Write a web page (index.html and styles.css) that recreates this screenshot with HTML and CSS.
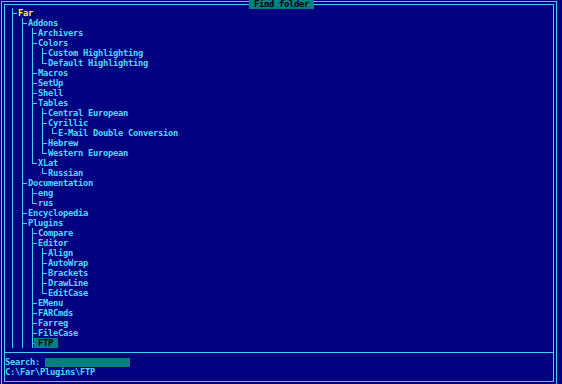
FILE: index.html
```html
<!DOCTYPE html>
<html>
<head>
<meta charset="utf-8">
<title>Find folder</title>
<link rel="stylesheet" href="styles.css">
</head>
<body>

<div class="dialog">
    <div class="title">Find folder</div>
    <div class="inner">

        <div class="tree">
            <div class="row"><i class="t"></i><span class="name root">Far</span></div>
            <div class="row"><i class="v"></i><i class="t"></i><span class="name">Addons</span></div>
            <div class="row"><i class="v"></i><i class="v"></i><i class="t"></i><span class="name">Archivers</span></div>
            <div class="row"><i class="v"></i><i class="v"></i><i class="t"></i><span class="name">Colors</span></div>
            <div class="row"><i class="v"></i><i class="v"></i><i class="v"></i><i class="t"></i><span class="name">Custom Highlighting</span></div>
            <div class="row"><i class="v"></i><i class="v"></i><i class="v"></i><i class="l"></i><span class="name">Default Highlighting</span></div>
            <div class="row"><i class="v"></i><i class="v"></i><i class="t"></i><span class="name">Macros</span></div>
            <div class="row"><i class="v"></i><i class="v"></i><i class="t"></i><span class="name">SetUp</span></div>
            <div class="row"><i class="v"></i><i class="v"></i><i class="t"></i><span class="name">Shell</span></div>
            <div class="row"><i class="v"></i><i class="v"></i><i class="t"></i><span class="name">Tables</span></div>
            <div class="row"><i class="v"></i><i class="v"></i><i class="v"></i><i class="t"></i><span class="name">Central European</span></div>
            <div class="row"><i class="v"></i><i class="v"></i><i class="v"></i><i class="t"></i><span class="name">Cyrillic</span></div>
            <div class="row"><i class="v"></i><i class="v"></i><i class="v"></i><i class="v"></i><i class="l"></i><span class="name">E-Mail Double Conversion</span></div>
            <div class="row"><i class="v"></i><i class="v"></i><i class="v"></i><i class="t"></i><span class="name">Hebrew</span></div>
            <div class="row"><i class="v"></i><i class="v"></i><i class="v"></i><i class="l"></i><span class="name">Western European</span></div>
            <div class="row"><i class="v"></i><i class="v"></i><i class="l"></i><span class="name">XLat</span></div>
            <div class="row"><i class="v"></i><i class="v"></i><i class="e"></i><i class="l"></i><span class="name">Russian</span></div>
            <div class="row"><i class="v"></i><i class="t"></i><span class="name">Documentation</span></div>
            <div class="row"><i class="v"></i><i class="v"></i><i class="t"></i><span class="name">eng</span></div>
            <div class="row"><i class="v"></i><i class="v"></i><i class="l"></i><span class="name">rus</span></div>
            <div class="row"><i class="v"></i><i class="t"></i><span class="name">Encyclopedia</span></div>
            <div class="row"><i class="v"></i><i class="t"></i><span class="name">Plugins</span></div>
            <div class="row"><i class="v"></i><i class="v"></i><i class="t"></i><span class="name">Compare</span></div>
            <div class="row"><i class="v"></i><i class="v"></i><i class="t"></i><span class="name">Editor</span></div>
            <div class="row"><i class="v"></i><i class="v"></i><i class="v"></i><i class="t"></i><span class="name">Align</span></div>
            <div class="row"><i class="v"></i><i class="v"></i><i class="v"></i><i class="t"></i><span class="name">AutoWrap</span></div>
            <div class="row"><i class="v"></i><i class="v"></i><i class="v"></i><i class="t"></i><span class="name">Brackets</span></div>
            <div class="row"><i class="v"></i><i class="v"></i><i class="v"></i><i class="t"></i><span class="name">DrawLine</span></div>
            <div class="row"><i class="v"></i><i class="v"></i><i class="v"></i><i class="l"></i><span class="name">EditCase</span></div>
            <div class="row"><i class="v"></i><i class="v"></i><i class="t"></i><span class="name">EMenu</span></div>
            <div class="row"><i class="v"></i><i class="v"></i><i class="t"></i><span class="name">FARCmds</span></div>
            <div class="row"><i class="v"></i><i class="v"></i><i class="t"></i><span class="name">Farreg</span></div>
            <div class="row"><i class="v"></i><i class="v"></i><i class="t"></i><span class="name">FileCase</span></div>
            <div class="row"><i class="v"></i><i class="v"></i><i class="t"></i><span class="name sel">FTP</span></div>
        </div>

        <div class="bottom">
            <div class="line"><span>Search: </span><span class="field"></span></div>
            <div class="line"><span>C:\Far\Plugins\FTP</span></div>
        </div>

    </div>
</div>

</body>
</html>
```
FILE: styles.css
```css
html, body {
    margin: 0;
    height: 100%;
    overflow: hidden;
}

body {
    --line: #40d0ff;
    background: #000080;
    color: #50d8ff;
    font-family: "DejaVu Sans Mono", "Liberation Mono", monospace;
    font-size: 8.8px;
    letter-spacing: -0.3px;
    font-weight: bold;
}

/* double frame of the dialog */
.dialog {
    position: relative;
    margin: 1px 5px 0 1px;
    border: 1px solid var(--line);
    padding: 2px;
}

.inner {
    border: 1px solid var(--line);
}

.title {
    position: absolute;
    top: -2px;
    left: 247px;
    height: 9px;
    line-height: 9px;
    padding: 0 5px;
    background: #008080;
    color: #000;
}

/* tree */
.tree {
    padding: 3px 0 4px 7px;
}

.row {
    display: flex;
    height: 10px;
    line-height: 10px;
    white-space: pre;
}

.row i {
    flex: none;
    height: 10px;
}

.v {
    width: 10px;
    box-sizing: border-box;
    border-left: 1px solid var(--line);
}

.e {
    width: 10px;
}

.t {
    width: 5px;
    background:
        linear-gradient(var(--line), var(--line)) 0 0 / 1px 10px no-repeat,
        linear-gradient(var(--line), var(--line)) 0 5px / 5px 1px no-repeat;
}

.l {
    width: 5px;
    background:
        linear-gradient(var(--line), var(--line)) 0 0 / 1px 6px no-repeat,
        linear-gradient(var(--line), var(--line)) 0 5px / 5px 1px no-repeat;
}

.name {
    padding-left: 1px;
}

.root {
    color: #ffff00;
}

.sel {
    margin-left: -3px;
    padding: 0 5px 0 4px;
    background: #008080;
    color: #000;
}

/* search + path */
.bottom {
    border-top: 1px solid var(--line);
    padding: 4px 0 4px 0;
}

.line {
    display: flex;
    height: 10px;
    line-height: 10px;
    white-space: pre;
}

.field {
    width: 85px;
    height: 9px;
    margin-top: 1px;
    background: #008080;
}
```
